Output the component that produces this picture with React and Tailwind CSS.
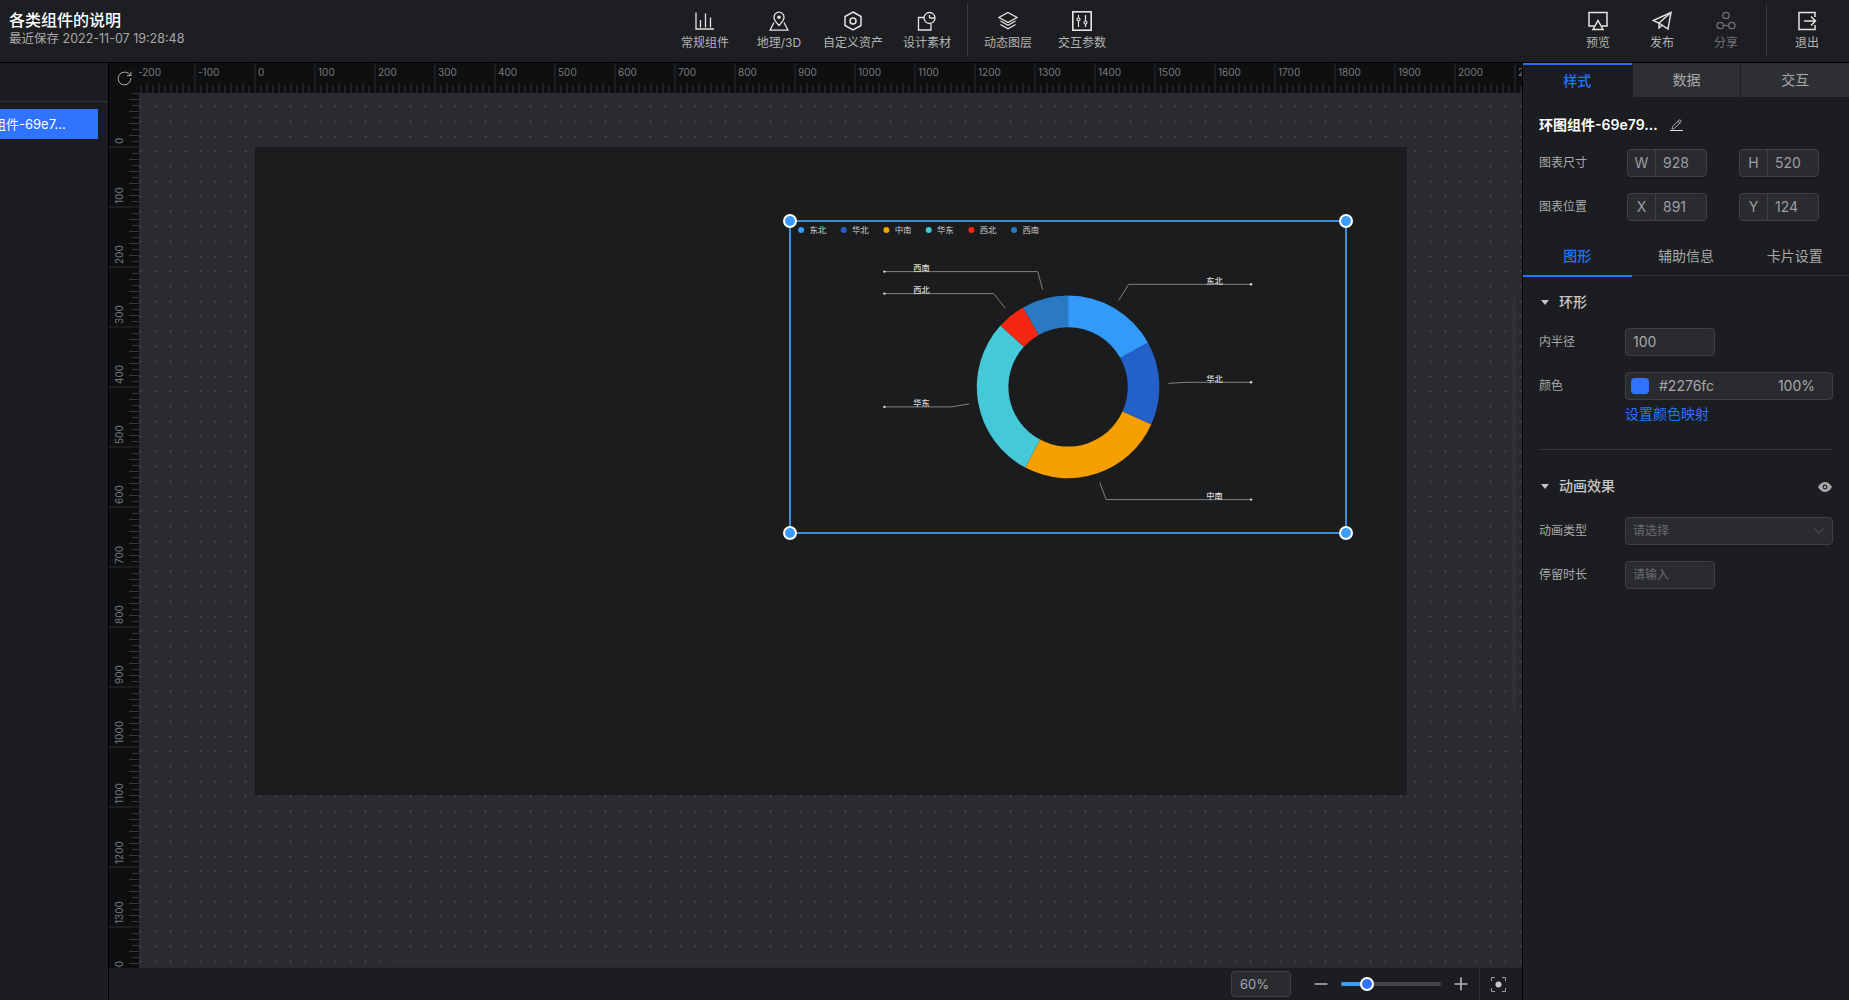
import React from "react";
import { Minus, Pencil, Plus, RotateCw, ChevronDown } from "lucide-react";

const CX = 1067.7;
const CY = 387.3;
const OUTER = 91.3;
const INNER = 59.7;

const slices = [
  { name: "东北", color: "#3399fb", from: 0, to: 61.1 },
  { name: "华北", color: "#2360c8", from: 61.1, to: 114.4 },
  { name: "中南", color: "#f5a000", from: 114.4, to: 208 },
  { name: "华东", color: "#45c8d8", from: 208, to: 312.2 },
  { name: "西北", color: "#f52712", from: 312.2, to: 330.5 },
  { name: "西南", color: "#2a79c4", from: 330.5, to: 360 },
];

const legendX = [800.7, 843.3, 886, 928.3, 971, 1013.7];

const labels = [
  { name: "西南", points: "884,272 1037.3,272 1042.3,290", x: 921, y: 268.3, end: 884, endY: 272 },
  { name: "西北", points: "884,294 993.3,294 1005,308.7", x: 921, y: 290.3, end: 884, endY: 294 },
  { name: "华东", points: "884,407.3 951,407.3 968.7,404.3", x: 921, y: 403, end: 884, endY: 407.3 },
  { name: "东北", points: "1250.7,284.7 1128.3,284.7 1118.3,300.7", x: 1214, y: 281, end: 1250.7, endY: 284.7 },
  { name: "华北", points: "1250.7,382.7 1186.7,382.7 1168,383.7", x: 1214, y: 379, end: 1250.7, endY: 382.7 },
  { name: "中南", points: "1250.7,500 1105.7,500 1099.3,482.7", x: 1214, y: 496, end: 1250.7, endY: 500 },
];

const polar = (r, deg) => {
  const a = (deg * Math.PI) / 180;
  return [CX + r * Math.sin(a), CY - r * Math.cos(a)];
};

const slicePath = (from, to) => {
  const [x1, y1] = polar(OUTER, from);
  const [x2, y2] = polar(OUTER, to);
  const [x3, y3] = polar(INNER, to);
  const [x4, y4] = polar(INNER, from);
  const big = to - from > 180 ? 1 : 0;
  return `M${x1} ${y1}A${OUTER} ${OUTER} 0 ${big} 1 ${x2} ${y2}L${x3} ${y3}A${INNER} ${INNER} 0 ${big} 0 ${x4} ${y4}Z`;
};

const Svg = ({ children, size = 20 }) => (
  <svg width={size} height={size} viewBox="0 0 20 20" fill="none" stroke="currentColor" strokeWidth="1.3">
    {children}
  </svg>
);

const BarsIcon = () => (
  <Svg>
    <path d="M1 1.5V18H19" />
    <path d="M5.5 16.5V9M10.5 16.5V2.5M15.5 16.5V6.5" />
  </Svg>
);
const PinIcon = () => (
  <Svg>
    <path d="M10 14.5C7.5 11.5 5 9.5 5 6.2a5 5 0 0 1 10 0C15 9.5 12.5 11.5 10 14.5Z" />
    <circle cx="10" cy="6.2" r="1.8" fill="currentColor" stroke="none" />
    <path d="M5 11.5L1 19.2H19L15 11.5" />
  </Svg>
);
const HexIcon = () => (
  <Svg>
    <path d="M10 1L18 5.5V14.5L10 19L2 14.5V5.5Z" strokeWidth="1.5" />
    <circle cx="10" cy="10" r="3" strokeWidth="1.5" />
  </Svg>
);
const AssetIcon = () => (
  <Svg>
    <path d="M7.5 6.5H1.5V19H14V13" />
    <circle cx="12.5" cy="7" r="5.5" />
    <path d="M12.5 7H18M12.5 4V7" />
  </Svg>
);
const LayersIcon = () => (
  <Svg>
    <path d="M10 1.5L19 6.5L10 11.5L1 6.5Z" />
    <path d="M2.5 10L10 14.2L17.5 10" />
    <path d="M2.5 13.5L10 17.7L17.5 13.5" />
  </Svg>
);
const SlidersIcon = () => (
  <Svg>
    <rect x="0.8" y="0.8" width="18.4" height="18.4" strokeWidth="1.6" />
    <path d="M6.5 4V7M6.5 10V16M13.5 4V10M13.5 13V16" strokeWidth="1.2" />
    <circle cx="6.5" cy="8.5" r="1.5" strokeWidth="1.2" />
    <circle cx="13.5" cy="11.5" r="1.5" strokeWidth="1.2" />
  </Svg>
);
const PreviewIcon = () => (
  <Svg>
    <path d="M6 15H1V1.5H19V15H14" strokeWidth="1.5" />
    <path d="M10 9.5L15 18.5H5Z" strokeWidth="1.5" />
  </Svg>
);
const SendIcon = () => (
  <Svg>
    <path d="M19 1.5L1 9.5L7 12L16 18Z" strokeWidth="1.4" />
    <path d="M19 1.5L7 12V17L10.5 14" strokeWidth="1.4" />
  </Svg>
);
const ShareIcon = () => (
  <Svg>
    <circle cx="10" cy="4.5" r="3.2" />
    <circle cx="4.2" cy="14.5" r="3.2" />
    <circle cx="15.8" cy="14.5" r="3.2" />
    <path d="M7.5 14.5H12.5" />
  </Svg>
);
const ExitIcon = () => (
  <Svg>
    <path d="M18 6V1.5H2V18.5H18V14" strokeWidth="1.5" />
    <path d="M7 10H18.5M14 5.5L18.5 10L14 14.5" strokeWidth="1.5" />
  </Svg>
);
const FocusIcon = () => (
  <svg width="15" height="15" viewBox="0 0 15 15" fill="none" stroke="#9a9ca0">
    <path d="M0.5 4V0.5H4M11 0.5H14.5V4M14.5 11V14.5H11M4 14.5H0.5V11" />
    <circle cx="7.5" cy="7.5" r="3" fill="#c8c8c8" stroke="none" />
  </svg>
);
const EyeIcon = () => (
  <svg width="14" height="10" viewBox="0 0 14 10">
    <path d="M0 5C2 1.5 4.5 0 7 0s5 1.5 7 5c-2 3.5-4.5 5-7 5S2 8.5 0 5Z" fill="#a8a8a8" />
    <circle cx="7" cy="5" r="2.4" fill="#1c1d20" />
    <circle cx="7" cy="5" r="1.3" fill="#a8a8a8" />
  </svg>
);

const NavItem = ({ icon, label, dim, wide }) => (
  <div
    className={`flex flex-col items-center justify-start pt-[11px] h-full ${wide ? "w-[64px]" : "w-[74px]"} ${
      dim ? "text-[#6f7175]" : "text-[#e4e4e4]"
    }`}
  >
    <div className="h-[20px] flex items-center">{icon}</div>
    <span className={`mt-[2px] text-xs leading-[20px] ${dim ? "text-[#6f7175]" : "text-[#b4b4b4]"}`}>{label}</span>
  </div>
);

const HorizontalRuler = () => {
  const ticks = [];
  for (let x = 135; x < 1522; x += 6) {
    const step = Math.round((x - 135) / 6);
    if (step % 10 === 0) continue;
    ticks.push(<line key={x} x1={x - 139} x2={x - 139} y1={step % 2 ? 23 : 20} y2="30" stroke="#35373a" />);
  }
  const majors = [];
  for (let v = -200; v <= 2100; v += 100) {
    const x = 255 + v * 0.6 - 139;
    majors.push(
      <g key={v}>
        <line x1={x} x2={x} y1="0" y2="30" stroke="#2b2c2e" />
        <text x={x + 3} y="13" fontSize="10" fill="#77797d">
          {v}
        </text>
      </g>
    );
  }
  return (
    <svg className="flex-1 h-[30px] overflow-hidden" height="30">
      {ticks}
      {majors}
    </svg>
  );
};

const VerticalRuler = () => {
  const ticks = [];
  for (let y = 93; y < 968; y += 6) {
    const step = Math.round((y - 87) / 6);
    if (step % 10 === 0) continue;
    ticks.push(<line key={y} y1={y - 93 + 0.5} y2={y - 93 + 0.5} x1={step % 2 ? 23 : 20} x2="30" stroke="#35373a" />);
  }
  const majors = [];
  for (let v = 0; v <= 1400; v += 100) {
    const y = v * 0.6 + 147 - 93;
    majors.push(
      <g key={v}>
        <line x1="0" x2="30" y1={y} y2={y} stroke="#2b2c2e" />
        <text transform={`translate(14 ${y - 3}) rotate(-90)`} fontSize="10" fill="#77797d">
          {v}
        </text>
      </g>
    );
  }
  return (
    <svg className="w-[30px] h-full shrink-0 bg-[#0e0f10]" width="30">
      {ticks}
      {majors}
    </svg>
  );
};

const Chart = () => (
  <svg className="w-full h-full" viewBox="789.6 221.4 556.8 312">
    {slices.map((s, i) => (
      <g key={s.name}>
        <path d={slicePath(s.from, s.to)} fill={s.color} />
        <circle cx={legendX[i]} cy="230.3" r="3" fill={s.color} />
        <text x={legendX[i] + 8.3} y="233.3" fontSize="8.4" fill="#d0d0d0">
          {s.name}
        </text>
      </g>
    ))}
    {labels.map((l) => (
      <g key={l.name}>
        <polyline points={l.points} fill="none" stroke="#808285" strokeWidth="1" />
        <circle cx={l.end} cy={l.endY} r="1.2" fill="#d8d8d8" />
        <text x={l.x} y={l.y + 3} fontSize="8.2" fontWeight="500" fill="#d8d8d8" textAnchor="middle">
          {l.name}
        </text>
      </g>
    ))}
  </svg>
);

const Handle = ({ className }) => (
  <span className={`absolute w-[14px] h-[14px] rounded-full bg-[#3a9cfb] border-2 border-white ${className}`} />
);

const SizeInput = ({ label, value }) => (
  <div className="flex w-[80px] h-[28px] bg-[#2a2b2f] border border-[#3e4044] rounded-sm text-[#9c9ea2]">
    <span className="w-[28px] flex items-center justify-center text-sm border-r border-[#3e4044]">{label}</span>
    <span className="pl-[7px] flex items-center text-sm">{value}</span>
  </div>
);

const Row = ({ label, children, className = "" }) => (
  <div className={`flex items-center h-[28px] pl-[16px] ${className}`}>
    <span className="w-[86px] text-xs text-[#a8a8a8]">{label}</span>
    {children}
  </div>
);

const Triangle = () => <span className="w-0 h-0 border-x-[4px] border-x-transparent border-t-[5px] border-t-[#c4c4c4]" />;

export default function App() {
  return (
    <div className="w-full h-screen flex flex-col overflow-hidden bg-[#1c1d20] font-['Inter','Noto_Sans_CJK_SC',sans-serif]">
      <header className="h-[63px] shrink-0 flex bg-[#1d1e21] border-b border-black">
        <div className="w-[668px] pl-[9px] pt-[10px]">
          <h1 className="text-base leading-[20px] font-medium text-white">各类组件的说明</h1>
          <p className="text-[12.5px] leading-[17px] text-[#a8a8a8]">最近保存 2022-11-07 19:28:48</p>
        </div>
        <NavItem icon={<BarsIcon />} label="常规组件" />
        <NavItem icon={<PinIcon />} label="地理/3D" />
        <NavItem icon={<HexIcon />} label="自定义资产" />
        <NavItem icon={<AssetIcon />} label="设计素材" />
        <div className="w-px h-[52px] mx-[3px] mt-[4px] bg-[#3a3c40]" />
        <NavItem icon={<LayersIcon />} label="动态图层" />
        <NavItem icon={<SlidersIcon />} label="交互参数" />
        <div className="ml-auto flex pr-[10px]">
          <NavItem wide icon={<PreviewIcon />} label="预览" />
          <NavItem wide icon={<SendIcon />} label="发布" />
          <NavItem wide dim icon={<ShareIcon />} label="分享" />
          <div className="w-px h-[52px] mx-[8px] mt-[4px] bg-[#3a3c40]" />
          <NavItem wide icon={<ExitIcon />} label="退出" />
        </div>
      </header>

      <div className="flex-1 min-h-0 flex">
        <aside className="w-[109px] shrink-0 border-r border-black bg-[#1c1d20]">
          <div className="h-[39px] border-b border-[#303236]" />
          <div className="mt-[7px] w-[98px] h-[30px] pt-[1px] bg-[#2f73ff] overflow-hidden flex items-center">
            <span className="ml-[-33px] text-[13px] text-white whitespace-nowrap">环图组件-69e7...</span>
          </div>
        </aside>

        <main className="flex-1 min-w-0 flex flex-col">
          <div className="h-[30px] shrink-0 flex bg-[#0e0f10]">
            <div className="w-[30px] shrink-0 flex items-center justify-center">
              <RotateCw size={17} strokeWidth={1.4} className="text-[#b0b0b0]" />
            </div>
            <HorizontalRuler />
          </div>
          <div className="flex-1 min-h-0 flex">
            <VerticalRuler />
            <div className="relative flex-1 overflow-hidden bg-[#2a2b30] bg-[radial-gradient(circle_at_1.5px_13.5px,#4a4c51_0.9px,transparent_1.1px)] bg-size-[15px_15px]">
              <div className="absolute left-[116px] top-[54px] w-[1152px] h-[648px] bg-[#1b1c1e]">
                <div className="absolute left-[534.6px] top-[74.4px] w-[556.8px] h-[312px]">
                  <Chart />
                  <span className="absolute left-[-1px] top-[-1px] right-[-1px] bottom-[-1px] border-2 border-[#3a8ed8]" />
                  <Handle className="left-[-7px] top-[-7px]" />
                  <Handle className="right-[-7px] top-[-7px]" />
                  <Handle className="left-[-7px] bottom-[-7px]" />
                  <Handle className="right-[-7px] bottom-[-7px]" />
                </div>
              </div>
              <span className="absolute left-[256px] bottom-[5px] w-[743px] h-[3px] bg-[#303137] rounded-full" />
              <span className="absolute right-[6px] top-[202px] w-[4px] h-[418px] bg-[#303137] rounded-full" />
            </div>
          </div>
          <div className="h-[32px] shrink-0 flex items-center bg-[#1c1d20]">
            <div className="ml-[1122px] w-[60px] h-[26px] pt-[1px] flex items-center pl-[8px] text-[13px] text-[#a8a8a8] bg-[#2a2b2f] border border-[#3e4044] rounded-sm">
              60%
            </div>
            <Minus size={20} strokeWidth={2} className="ml-[20px] text-[#b4b4b4]" />
            <div className="relative ml-[10px] w-[100px] h-[4px] rounded-full bg-[#43454a]">
              <div className="w-[26px] h-full rounded-full bg-[#3a9cfb]" />
              <span className="absolute left-[18.5px] top-[-5px] w-[14px] h-[14px] rounded-full bg-[#2f73ff] border-2 border-white" />
            </div>
            <Plus size={20} strokeWidth={2} className="ml-[10px] text-[#b4b4b4]" />
            <div className="ml-[8px] w-px h-full bg-[#303236]" />
            <div className="ml-[11px]">
              <FocusIcon />
            </div>
          </div>
        </main>

        <aside className="w-[327px] shrink-0 border-l border-black bg-[#1c1d20]">
          <div className="grid grid-cols-3 h-[34px]">
            <div className="flex items-center justify-center border-t-2 border-[#2276fc] text-sm font-medium text-[#2276fc]">样式</div>
            <div className="flex items-center justify-center bg-[#2e3034] border-l border-[#1c1d20] text-sm text-[#a8a8a8]">数据</div>
            <div className="flex items-center justify-center bg-[#2e3034] border-l border-[#1c1d20] text-sm text-[#a8a8a8]">交互</div>
          </div>
          <div className="h-[20px] mt-[18px] pl-[16px] flex items-center">
            <span className="text-sm font-semibold text-white">环图组件-69e79...</span>
            <span className="ml-[12px] flex flex-col items-center">
              <Pencil size={11} strokeWidth={1.6} className="text-[#e0e0e0]" />
              <span className="w-[13px] h-px bg-[#e0e0e0]" />
            </span>
          </div>
          <Row label="图表尺寸" className="mt-[14px]">
            <div className="ml-[2px] flex gap-[32px]">
              <SizeInput label="W" value="928" />
              <SizeInput label="H" value="520" />
            </div>
          </Row>
          <Row label="图表位置" className="mt-[16px]">
            <div className="ml-[2px] flex gap-[32px]">
              <SizeInput label="X" value="891" />
              <SizeInput label="Y" value="124" />
            </div>
          </Row>
          <div className="mt-[21px] grid grid-cols-3 h-[34px] border-b border-[#303236] text-sm text-[#a8a8a8]">
            <div className="flex items-center justify-center border-b-2 border-[#2276fc] font-medium text-[#2276fc] h-[35px] pb-[5px]">图形</div>
            <div className="flex items-center justify-center pb-[7px]">辅助信息</div>
            <div className="flex items-center justify-center pb-[7px]">卡片设置</div>
          </div>
          <div className="mt-[16px] h-[20px] pl-[18px] flex items-center gap-[10px]">
            <Triangle />
            <span className="text-sm font-medium text-[#c8c8c8]">环形</span>
          </div>
          <Row label="内半径" className="mt-[16px]">
            <div className="w-[90px] h-[28px] pl-[7px] flex items-center text-sm text-[#a8a8a8] bg-[#2a2b2f] border border-[#3e4044] rounded-sm">100</div>
          </Row>
          <Row label="颜色" className="mt-[16px]">
            <div className="w-[208px] h-[28px] px-[5px] flex items-center text-sm text-[#a8a8a8] bg-[#2a2b2f] border border-[#3e4044] rounded-sm">
              <span className="w-[18px] h-[16px] rounded-sm bg-[#2f73ff]" />
              <span className="ml-[10px]">#2276fc</span>
              <span className="ml-auto mr-[12px]">100%</span>
            </div>
          </Row>
          <div className="mt-[4px] pl-[102px] text-sm leading-[20px] text-[#2276fc]">设置颜色映射</div>
          <div className="mt-[25px] mx-[16px] h-px bg-[#36383c] w-[294px]" />
          <div className="mt-[26px] h-[20px] pl-[18px] pr-[16px] flex items-center gap-[10px]">
            <Triangle />
            <span className="text-sm font-medium text-[#c8c8c8]">动画效果</span>
            <span className="ml-auto mt-[2px] pr-[1px]">
              <EyeIcon />
            </span>
          </div>
          <Row label="动画类型" className="mt-[21px]">
            <div className="w-[208px] h-[28px] pl-[7px] pr-[4px] flex items-center justify-between text-xs text-[#6a6c70] bg-[#2a2b2f] border border-[#3e4044] rounded-sm">
              请选择
              <ChevronDown size={18} strokeWidth={1} />
            </div>
          </Row>
          <Row label="停留时长" className="mt-[16px]">
            <div className="w-[90px] h-[28px] pl-[7px] flex items-center text-xs text-[#6a6c70] bg-[#2a2b2f] border border-[#3e4044] rounded-sm">请输入</div>
          </Row>
        </aside>
      </div>
    </div>
  );
}
